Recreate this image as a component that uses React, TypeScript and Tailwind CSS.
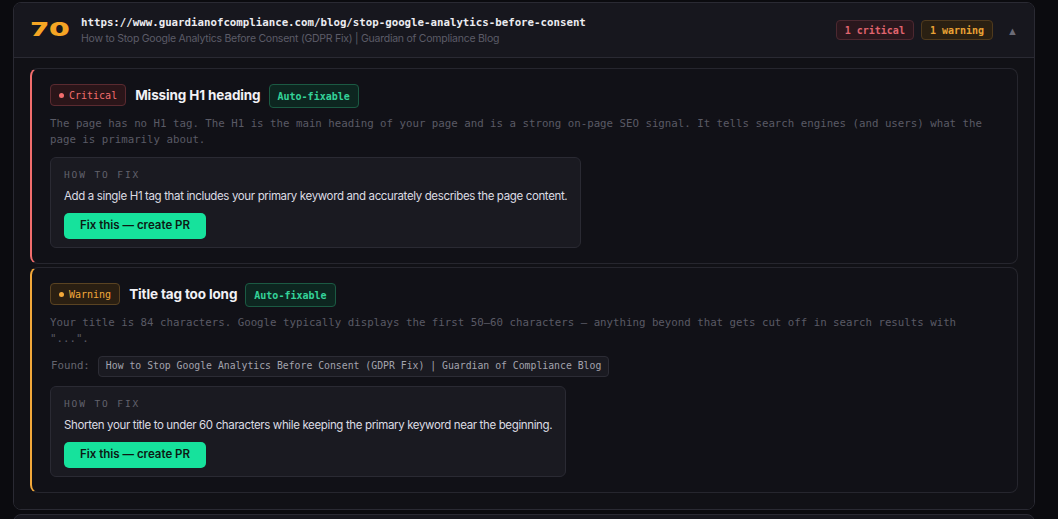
import React from "react";

const MONO = "font-['DejaVu_Sans_Mono','Liberation_Mono',monospace]";
const SANS = "font-['Inter','Noto_Sans',sans-serif]";

function Badge({ kind }: { kind: "critical" | "warning" }) {
  const c =
    kind === "critical"
      ? "text-[#f26d6d] bg-[#2a1519] border-[#5a2a30]"
      : "text-[#f2a83a] bg-[#2a1f12] border-[#5a4322]";
  const dot = kind === "critical" ? "bg-[#f26d6d]" : "bg-[#f2a83a]";
  return (
    <span className={`${MONO} ${c} inline-flex items-center gap-[5px] h-[22px] px-[8px] rounded-[4px] border text-[10px]`}>
      <span className={`w-[5px] h-[5px] rounded-full ${dot}`} />
      {kind === "critical" ? "Critical" : "Warning"}
    </span>
  );
}

function AutoFix() {
  return (
    <span className={`${MONO} inline-flex items-center h-[24px] px-[8px] rounded-[4px] border border-[#1b5a43] bg-[#0d2620] text-[#34d399] text-[10px] font-bold`}>
      Auto-fixable
    </span>
  );
}

function HowToFix({ text }: { text: string }) {
  return (
    <div className="inline-flex flex-col rounded-[6px] border border-[#2a2a33] bg-[#1a1a21] pt-[11px] pb-[8px] pl-[13px] pr-[13px]">
      <div className={`${MONO} text-[9.5px] tracking-[0.2em] text-[#62626d] leading-[12px]`}>HOW TO FIX</div>
      <div className={`${SANS} text-[11.5px] tracking-[-0.36px] text-[#dcdce3] mt-[7px] leading-[16px]`}>{text}</div>
      <button className={`${SANS} mt-[9px] w-[142px] h-[26px] rounded-[5px] bg-[#16e29c] text-[#0c1a14] text-[11.5px] font-semibold`}>
        Fix this — create PR
      </button>
    </div>
  );
}

function Issue({
  kind,
  title,
  desc,
  found,
  fix,
}: {
  kind: "critical" | "warning";
  title: string;
  desc: React.ReactNode;
  found?: string;
  fix: string;
}) {
  const lb = kind === "critical" ? "border-l-[#f26d6d]" : "border-l-[#f2a83a]";
  return (
    <div className={`rounded-[8px] border border-[#26262e] border-l-2 ${lb} bg-[#111117] pl-[18px] pr-[20px] pt-[13px] pb-[15px]`}>
      <div className="flex items-center h-[26px]">
        <Badge kind={kind} />
        <span className={`${SANS} ml-[9px] text-[13.5px] font-bold text-[#f1f1f5] tracking-[-0.01em]`}>{title}</span>
        <span className="ml-[8px]">
          <AutoFix />
        </span>
      </div>
      <p className={`${MONO} mt-[8px] text-[10.75px] leading-[16px] text-[#5a5a65]`}>{desc}</p>
      {found && (
        <div className="flex items-center mt-[9px]">
          <span className={`${MONO} text-[10.75px] text-[#65656f] ml-[1px]`}>Found:</span>
          <span className={`${MONO} ml-[8px] h-[21px] inline-flex items-center px-[7px] rounded-[4px] border border-[#2c2c35] bg-[#1a1a21] text-[9.8px] text-[#a3a3ad]`}>
            {found}
          </span>
        </div>
      )}
      <div className="mt-[9px] flex">
        <HowToFix text={fix} />
      </div>
    </div>
  );
}

export default function App() {
  return (
    <div className="min-h-[519px] w-full bg-[#0b0b0f] pl-[13px] pr-[23px] pt-[2px] overflow-hidden">
      <div className="rounded-[8px] border border-[#2a2a33] overflow-hidden">
        <div className="flex items-center h-[55px] bg-[#17171e] border-b border-[#2a2a33] pl-[17px] pr-[16px]">
          <span className="w-[50px] flex items-center">
            <span className={`${SANS} inline-block origin-left scale-x-[1.5] text-[#f5a524] text-[19px] font-black tracking-[0.06em]`}>70</span>
          </span>
          <div className="flex flex-col">
            <span className={`${MONO} text-[10.75px] text-[#ececf1] leading-[15px] font-bold`}>
              https://www.guardianofcompliance.com/blog/stop-google-analytics-before-consent
            </span>
            <span className={`${SANS} text-[10.5px] tracking-[-0.25px] text-[#5c5c68] leading-[15px] mt-[1px]`}>
              How to Stop Google Analytics Before Consent (GDPR Fix) | Guardian of Compliance Blog
            </span>
          </div>
          <div className="ml-auto flex items-center gap-[7px]">
            <span className={`${MONO} h-[20px] inline-flex items-center px-[8px] rounded-[4px] border border-[#4c2830] bg-[#2a171d] text-[#e0646f] text-[10px] font-bold`}>
              1 critical
            </span>
            <span className={`${MONO} h-[20px] inline-flex items-center px-[8px] rounded-[4px] border border-[#4f3a1d] bg-[#2a2012] text-[#e9a235] text-[10px] font-bold`}>
              1 warning
            </span>
            <span className="ml-[7px] text-[#6b6b76] text-[11px] leading-none">▲</span>
          </div>
        </div>
        <div className="bg-[#111116] px-[16px] pt-[10px] pb-[16px] flex flex-col gap-[3px]">
          <Issue
            kind="critical"
            title="Missing H1 heading"
            desc="The page has no H1 tag. The H1 is the main heading of your page and is a strong on-page SEO signal. It tells search engines (and users) what the page is primarily about."
            fix="Add a single H1 tag that includes your primary keyword and accurately describes the page content."
          />
          <Issue
            kind="warning"
            title="Title tag too long"
            desc={'Your title is 84 characters. Google typically displays the first 50–60 characters — anything beyond that gets cut off in search results with "...".'}
            found="How to Stop Google Analytics Before Consent (GDPR Fix) | Guardian of Compliance Blog"
            fix="Shorten your title to under 60 characters while keeping the primary keyword near the beginning."
          />
        </div>
      </div>
      <div className="mt-[4px] h-[20px] rounded-t-[8px] border border-[#2a2a33] bg-[#17171e]" />
    </div>
  );
}
